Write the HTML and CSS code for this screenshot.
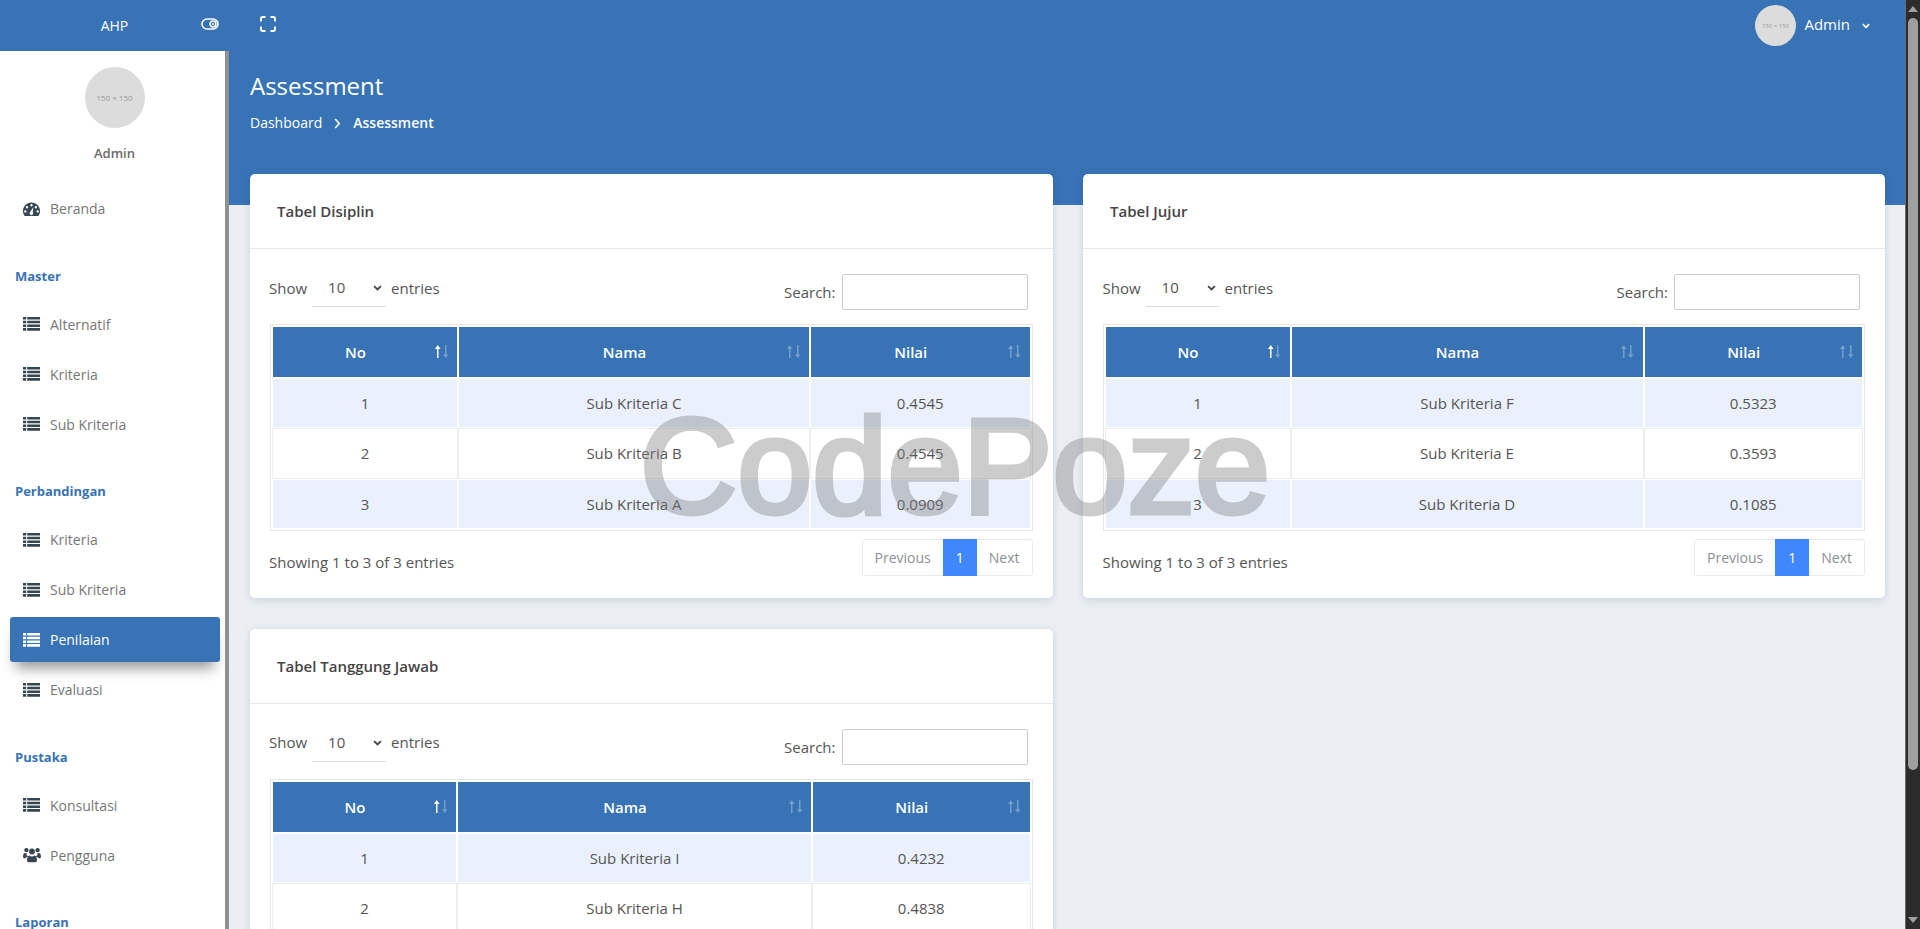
FILE: index.html
```html
<!DOCTYPE html>
<html lang="id">
<head>
<meta charset="utf-8">
<title>Assessment</title>
<link rel="stylesheet" href="styles.css">
</head>
<body>
<svg class="defs" width="0" height="0" aria-hidden="true">
  <symbol id="i-list" viewBox="0 0 17 14">
    <path d="M0 0h3.2v2.6H0zM4.2 0H17v2.6H4.2zM0 3.7h3.2v2.6H0zM4.2 3.7H17v2.6H4.2zM0 7.4h3.2V10H0zM4.2 7.4H17V10H4.2zM0 11.1h3.2v2.6H0zM4.2 11.1H17v2.6H4.2z"/>
  </symbol>
  <symbol id="i-sort" viewBox="0 0 8 14">
    <path d="M4 0L7 4.2H4.8V14H3.2V4.2H1z"/>
  </symbol>
  <symbol id="i-chev" viewBox="0 0 10 7">
    <path d="M1 1.2l4 4 4-4" fill="none" stroke="currentColor" stroke-width="2"/>
  </symbol>
</svg>

<div class="app">
  <header class="topbar">
    <div class="brand">AHP</div>
    <div class="top-tools">
      <svg class="tool-toggle" viewBox="0 0 18 12"><rect x="1" y="1" width="16" height="10" rx="5" fill="none" stroke="currentColor" stroke-width="1.6"/><circle cx="12" cy="6" r="2.9" fill="none" stroke="currentColor" stroke-width="1.5"/><circle cx="12" cy="6" r="1" fill="currentColor"/></svg>
      <svg class="tool-full" viewBox="0 0 16 16"><path d="M1 5.5V2.5A1.5 1.5 0 0 1 2.5 1H5.5M10.5 1h3A1.5 1.5 0 0 1 15 2.500v3M15 10.500v3A1.500 1.500 0 0 1 13.500 15h-3M5.500 15h-3A1.500 1.500 0 0 1 1 13.500v-3" fill="none" stroke="currentColor" stroke-width="1.9"/></svg>
    </div>
    <div class="top-user">
      <div class="avatar avatar-sm">150 × 150</div>
      <span class="top-name">Admin</span>
      <svg class="top-chev"><use href="#i-chev"/></svg>
    </div>
  </header>

  <div class="layout">
    <aside class="sidebar">
      <div class="avatar avatar-lg">150 × 150</div>
      <div class="side-name">Admin</div>
      <nav class="nav">
        <a class="item">
          <svg class="ic" viewBox="0 0 17 14"><path fill-rule="evenodd" d="M8.500.5C3.800.5 0 4.300 0 9c0 1.700.500 3.300 1.300 4.600.1.200.4.400.7.400h13c.3 0 .6-.2.7-.4C16.500 12.300 17 10.700 17 9 17 4.300 13.200.5 8.500.5zM8.500 2a1.200 1.200 0 1 1 0 2.400 1.200 1.200 0 0 1 0-2.400zM4 4a1.200 1.200 0 1 1 0 2.400A1.200 1.200 0 0 1 4 4zM2.300 8.200a1.200 1.200 0 1 1 0 2.400 1.200 1.200 0 0 1 0-2.400zM14.700 8.200a1.200 1.200 0 1 1 0 2.400 1.200 1.200 0 0 1 0-2.400zM12.900 4a1.200 1.200 0 1 1 0 2.400 1.200 1.200 0 0 1 0-2.400zM10.400 5.200L9.700 10a1.800 1.800 0 1 1-2.800.3z"/></svg>
          <span>Beranda</span>
        </a>
        <div class="label">Master</div>
        <a class="item"><svg class="ic"><use href="#i-list"/></svg><span>Alternatif</span></a>
        <a class="item"><svg class="ic"><use href="#i-list"/></svg><span>Kriteria</span></a>
        <a class="item"><svg class="ic"><use href="#i-list"/></svg><span>Sub Kriteria</span></a>
        <div class="label">Perbandingan</div>
        <a class="item"><svg class="ic"><use href="#i-list"/></svg><span>Kriteria</span></a>
        <a class="item"><svg class="ic"><use href="#i-list"/></svg><span>Sub Kriteria</span></a>
        <a class="item active"><svg class="ic"><use href="#i-list"/></svg><span>Penilaian</span></a>
        <a class="item"><svg class="ic"><use href="#i-list"/></svg><span>Evaluasi</span></a>
        <div class="label">Pustaka</div>
        <a class="item"><svg class="ic"><use href="#i-list"/></svg><span>Konsultasi</span></a>
        <a class="item">
          <svg class="ic ic-users" viewBox="0 0 18 15"><circle cx="3.400" cy="2.600" r="2.200"/><circle cx="14.600" cy="2.600" r="2.200"/><circle cx="9" cy="4" r="2.900"/><path d="M0 9.300C0 6.800.8 5.500 2.300 5.500c.6 0 1 .3 1.500.4-.3.8-.1 2.500 1 3.300C3.400 9.500 2.400 10.300 2 11 .8 10.900 0 10.400 0 9.300zM18 9.300c0-2.500-.8-3.800-2.300-3.800-.6 0-1 .3-1.500.4.3.8.1 2.500-1 3.300 1.400.3 2.400 1.100 2.800 1.800 1.200-.1 2-.6 2-1.700zM4 12.700C4 10.300 4.700 8 6.300 8c.7.700 1.700 1 2.700 1s2-.3 2.700-1C13.300 8 14 10.300 14 12.700c0 1.300-.9 2.100-2 2.100H6c-1.100 0-2-.8-2-2.100z"/></svg>
          <span>Pengguna</span>
        </a>
        <div class="label">Laporan</div>
      </nav>
    </aside>

    <main class="main">
      <section class="hero">
        <h1 class="title">Assessment</h1>
        <div class="crumbs">
          <span>Dashboard</span>
          <svg class="crumb-sep" viewBox="0 0 7 11"><path d="M1.200 1l4 4.500-4 4.500" fill="none" stroke="currentColor" stroke-width="1.600"/></svg>
          <strong>Assessment</strong>
        </div>
      </section>

      <div class="cards">
        <article class="card">
          <h2 class="card-title">Tabel Disiplin</h2>
          <div class="card-body">
            <div class="toolbar">
              <div class="len">Show
                <span class="sel"><select><option>10</option></select><svg class="sel-chev"><use href="#i-chev"/></svg></span>
                entries</div>
              <label class="search">Search:<input type="search"></label>
            </div>
            <table class="dt t-a">
              <colgroup><col class="c1"><col class="c2"><col class="c3"></colgroup>
              <thead><tr>
                <th>No<span class="sort"><svg class="up on"><use href="#i-sort"/></svg><svg class="down"><use href="#i-sort"/></svg></span></th>
                <th>Nama<span class="sort"><svg class="up"><use href="#i-sort"/></svg><svg class="down"><use href="#i-sort"/></svg></span></th>
                <th>Nilai<span class="sort"><svg class="up"><use href="#i-sort"/></svg><svg class="down"><use href="#i-sort"/></svg></span></th>
              </tr></thead>
              <tbody>
                <tr><td>1</td><td>Sub Kriteria C</td><td>0.4545</td></tr>
                <tr><td>2</td><td>Sub Kriteria B</td><td>0.4545</td></tr>
                <tr><td>3</td><td>Sub Kriteria A</td><td>0.0909</td></tr>
              </tbody>
            </table>
            <div class="foot">
              <div class="info">Showing 1 to 3 of 3 entries</div>
              <div class="pager"><a class="pg">Previous</a><a class="pg cur">1</a><a class="pg">Next</a></div>
            </div>
          </div>
        </article>

        <article class="card">
          <h2 class="card-title">Tabel Jujur</h2>
          <div class="card-body">
            <div class="toolbar">
              <div class="len">Show
                <span class="sel"><select><option>10</option></select><svg class="sel-chev"><use href="#i-chev"/></svg></span>
                entries</div>
              <label class="search">Search:<input type="search"></label>
            </div>
            <table class="dt t-b">
              <colgroup><col class="c1"><col class="c2"><col class="c3"></colgroup>
              <thead><tr>
                <th>No<span class="sort"><svg class="up on"><use href="#i-sort"/></svg><svg class="down"><use href="#i-sort"/></svg></span></th>
                <th>Nama<span class="sort"><svg class="up"><use href="#i-sort"/></svg><svg class="down"><use href="#i-sort"/></svg></span></th>
                <th>Nilai<span class="sort"><svg class="up"><use href="#i-sort"/></svg><svg class="down"><use href="#i-sort"/></svg></span></th>
              </tr></thead>
              <tbody>
                <tr><td>1</td><td>Sub Kriteria F</td><td>0.5323</td></tr>
                <tr><td>2</td><td>Sub Kriteria E</td><td>0.3593</td></tr>
                <tr><td>3</td><td>Sub Kriteria D</td><td>0.1085</td></tr>
              </tbody>
            </table>
            <div class="foot">
              <div class="info">Showing 1 to 3 of 3 entries</div>
              <div class="pager"><a class="pg">Previous</a><a class="pg cur">1</a><a class="pg">Next</a></div>
            </div>
          </div>
        </article>

        <article class="card">
          <h2 class="card-title">Tabel Tanggung Jawab</h2>
          <div class="card-body">
            <div class="toolbar">
              <div class="len">Show
                <span class="sel"><select><option>10</option></select><svg class="sel-chev"><use href="#i-chev"/></svg></span>
                entries</div>
              <label class="search">Search:<input type="search"></label>
            </div>
            <table class="dt t-c">
              <colgroup><col class="c1"><col class="c2"><col class="c3"></colgroup>
              <thead><tr>
                <th>No<span class="sort"><svg class="up on"><use href="#i-sort"/></svg><svg class="down"><use href="#i-sort"/></svg></span></th>
                <th>Nama<span class="sort"><svg class="up"><use href="#i-sort"/></svg><svg class="down"><use href="#i-sort"/></svg></span></th>
                <th>Nilai<span class="sort"><svg class="up"><use href="#i-sort"/></svg><svg class="down"><use href="#i-sort"/></svg></span></th>
              </tr></thead>
              <tbody>
                <tr><td>1</td><td>Sub Kriteria I</td><td>0.4232</td></tr>
                <tr><td>2</td><td>Sub Kriteria H</td><td>0.4838</td></tr>
              </tbody>
            </table>
          </div>
        </article>
      </div>
    </main>
  </div>
</div>

<div class="watermark">CodePoze</div>
<div class="scrollbar">
  <span class="sb-up"></span>
  <span class="sb-thumb"></span>
  <span class="sb-down"></span>
</div>
</body>
</html>
```

FILE: styles.css
```css
* { box-sizing: border-box; }
html, body { margin: 0; height: 100%; overflow: hidden; }
body {
  font-family: "Open Sans", "Noto Sans", sans-serif;
  font-size: 15px;
  color: #555;
  background: #ebeff3;
}
.defs { position: absolute; }

.app { height: 929px; margin-right: 14px; overflow: hidden; display: flex; flex-direction: column; }

/* top bar */
.topbar {
  height: 51px;
  flex: none;
  background: #3773b5;
  color: #fff;
  display: flex;
  align-items: center;
}
.brand { width: 229px; text-align: center; font-size: 14px; line-height: 51px; }
.top-tools { display: flex; align-items: center; margin-left: -28px; margin-top: -3px; }
.tool-toggle { width: 18px; height: 12px; }
.tool-full { width: 16px; height: 16px; margin-left: 41px; margin-top: -1px; }
.top-user { margin-left: auto; display: flex; align-items: center; padding-right: 36px; }
.top-name { font-size: 15px; margin-left: 8.500px; margin-top: -4px; }
.top-chev { width: 8px; height: 6px; margin-left: 12px; }

.avatar {
  border-radius: 50%;
  background: #dcdcdc;
  color: #9a9a9a;
  display: flex;
  align-items: center;
  justify-content: center;
  white-space: nowrap;
}
.avatar-sm { width: 41px; height: 41px; font-size: 6px; }
.avatar-lg { width: 60px; height: 61px; font-size: 8px; margin: 16px auto 0; }

/* layout */
.layout { flex: 1; min-height: 0; display: flex; }
.sidebar {
  width: 229px;
  flex: none;
  background: #fff;
  border-right: 4px solid #909090;
  overflow: hidden;
}
.side-name { text-align: center; font-size: 13px; font-weight: 600; color: #6a6a6a; margin-top: 16px; line-height: 18px; }
.avatar-lg, .side-name { transform: translateX(2px); }

.nav { padding: 0 5px 0 10px; margin-top: 24px; }
.item {
  height: 45px;
  margin-bottom: 5px;
  display: flex;
  align-items: center;
  padding-left: 13px;
  border-radius: 3px;
  color: #777;
  font-size: 14px;
}
.ic { width: 17px; height: 14px; flex: none; margin-right: 10px; fill: #37474f; }
.ic-users { width: 18px; height: 16px; margin-right: 9px; }
.item.active { background: #3773b5; color: #fff; box-shadow: 0 12px 14px -6px rgba(0, 0, 0, .42); }
.item.active .ic { fill: #fff; }
.label {
  height: 20px;
  line-height: 20px;
  margin: 34.500px 0 16px -5px;
  padding-left: 10px;
  font-size: 13px;
  font-weight: 700;
  color: #3773b5;
}

/* main */
.main { flex: 1; min-width: 0; background: #ebeff3; }
.hero { height: 154px; background: #3773b5; color: #fff; padding: 15px 21px 0; }
.title { margin: 0; font-size: 24px; font-weight: 400; line-height: 40px; }
.crumbs { display: flex; align-items: center; font-size: 14px; margin-top: 7px; line-height: 20px; }
.crumb-sep { width: 7px; height: 11px; margin: 0 12px; }
.crumbs strong { font-weight: 600; }

.cards {
  display: grid;
  grid-template-columns: 1fr 1fr;
  column-gap: 30px;
  row-gap: 31px;
  padding: 0 21px;
  margin-top: -31px;
  align-items: start;
}
.card {
  background: #fff;
  border-radius: 5px;
  box-shadow: 0 2px 8px rgba(60, 80, 110, .18);
}
.card-title {
  margin: 0;
  height: 75px;
  line-height: 74px;
  padding-left: 27px;
  font-size: 15px;
  font-weight: 600;
  color: #444;
  border-bottom: 1px solid #e6e8ec;
}
.card:nth-child(2) .card-title { padding-left: 27.500px; }
.card-body { padding: 25px 20px 22px; }

.toolbar { display: flex; justify-content: space-between; height: 50px; }
.len { display: flex; align-items: center; gap: 5px; height: 39px; margin-top: -6px; margin-left: -1px; }
.card:nth-child(2) .len, .card:nth-child(2) .info { margin-left: 0; }
.sel { position: relative; display: block; }
.sel select {
  display: block;
  appearance: none;
  -webkit-appearance: none;
  width: 74px;
  height: 39px;
  padding: 0 0 0 16px;
  border: 0;
  border-bottom: 1px solid #ddd;
  background: transparent;
  color: #555;
  font: 15px "Open Sans", sans-serif;
  border-radius: 0;
}
.sel-chev { position: absolute; right: 4px; top: 17px; width: 9px; height: 6px; color: #444; }
.search { display: flex; align-items: flex-start; padding-right: 5px; line-height: 36px; }
.search input {
  width: 186px;
  height: 36px;
  margin-left: 6px;
  border: 1px solid #ccc;
  border-radius: 2px;
  background: #fff;
  outline: 0;
}

/* table */
.dt {
  width: 100%;
  table-layout: fixed;
  border-collapse: separate;
  border-spacing: 2px;
  border: 1px solid #e6e6e6;
}
.t-a .c1 { width: 184px; } .t-a .c2 { width: 350px; }
.t-b .c1 { width: 184px; } .t-b .c2 { width: 351px; }
.t-c .c1 { width: 183px; } .t-c .c2 { width: 353px; }
.dt th {
  position: relative;
  height: 50px;
  padding: 0 19px 0 0;
  background: #3773b5;
  color: #fff;
  font-weight: 600;
  font-size: 15px;
  text-align: center;
}
.dt td {
  height: 48.300px;
  padding: 0;
  text-align: center;
  color: #555;
}
.dt tbody tr:nth-child(odd) td { background: #eaf1fd; }
.dt tbody tr:nth-child(even) td { box-shadow: 0 0 0 1px #eee; }
.sort { position: absolute; right: 8px; top: 17px; display: flex; }
.sort svg { width: 7.500px; height: 15px; fill: #fff; opacity: .3; display: block; }
.sort .down { transform: scaleY(-1); }
.sort .up.on { opacity: 1; }

.foot { display: flex; justify-content: space-between; margin-top: 8px; }
.info { margin-top: 13px; margin-left: -1px; line-height: 20px; }
.pager { display: flex; height: 37px; border: 1px solid #e9ecef; border-radius: 3px; }
.pg { display: flex; align-items: center; padding: 0 12px; color: #8b9097; font-size: 14px; }
.pg.cur { background: #3f87fb; color: #fff; padding: 0 13px; margin: -1px 0; }

/* overlays */
.watermark {
  position: fixed;
  left: 4px;
  right: 14px;
  top: 389px;
  text-align: center;
  pointer-events: none;
  font-family: "Liberation Sans", Arial, sans-serif;
  font-size: 135px;
  line-height: 156px;
  color: #808080;
  -webkit-text-stroke: 5px #808080;
  opacity: .4;
}
.scrollbar {
  position: fixed;
  top: 0;
  right: 0;
  bottom: 0;
  width: 15px;
  background: #2c2c2c;
  border-left: 1px solid #6a6a6a;
}
.sb-up, .sb-down {
  position: absolute;
  left: 2px;
  width: 0;
  height: 0;
  border-left: 5px solid transparent;
  border-right: 5px solid transparent;
}
.sb-up { top: 6px; border-bottom: 6px solid #a0a0a0; }
.sb-down { bottom: 6px; border-top: 6px solid #a0a0a0; }
.sb-thumb {
  position: absolute;
  left: 2px;
  top: 18px;
  width: 10px;
  height: 752px;
  border-radius: 5px;
  background: #9f9f9f;
}
```
